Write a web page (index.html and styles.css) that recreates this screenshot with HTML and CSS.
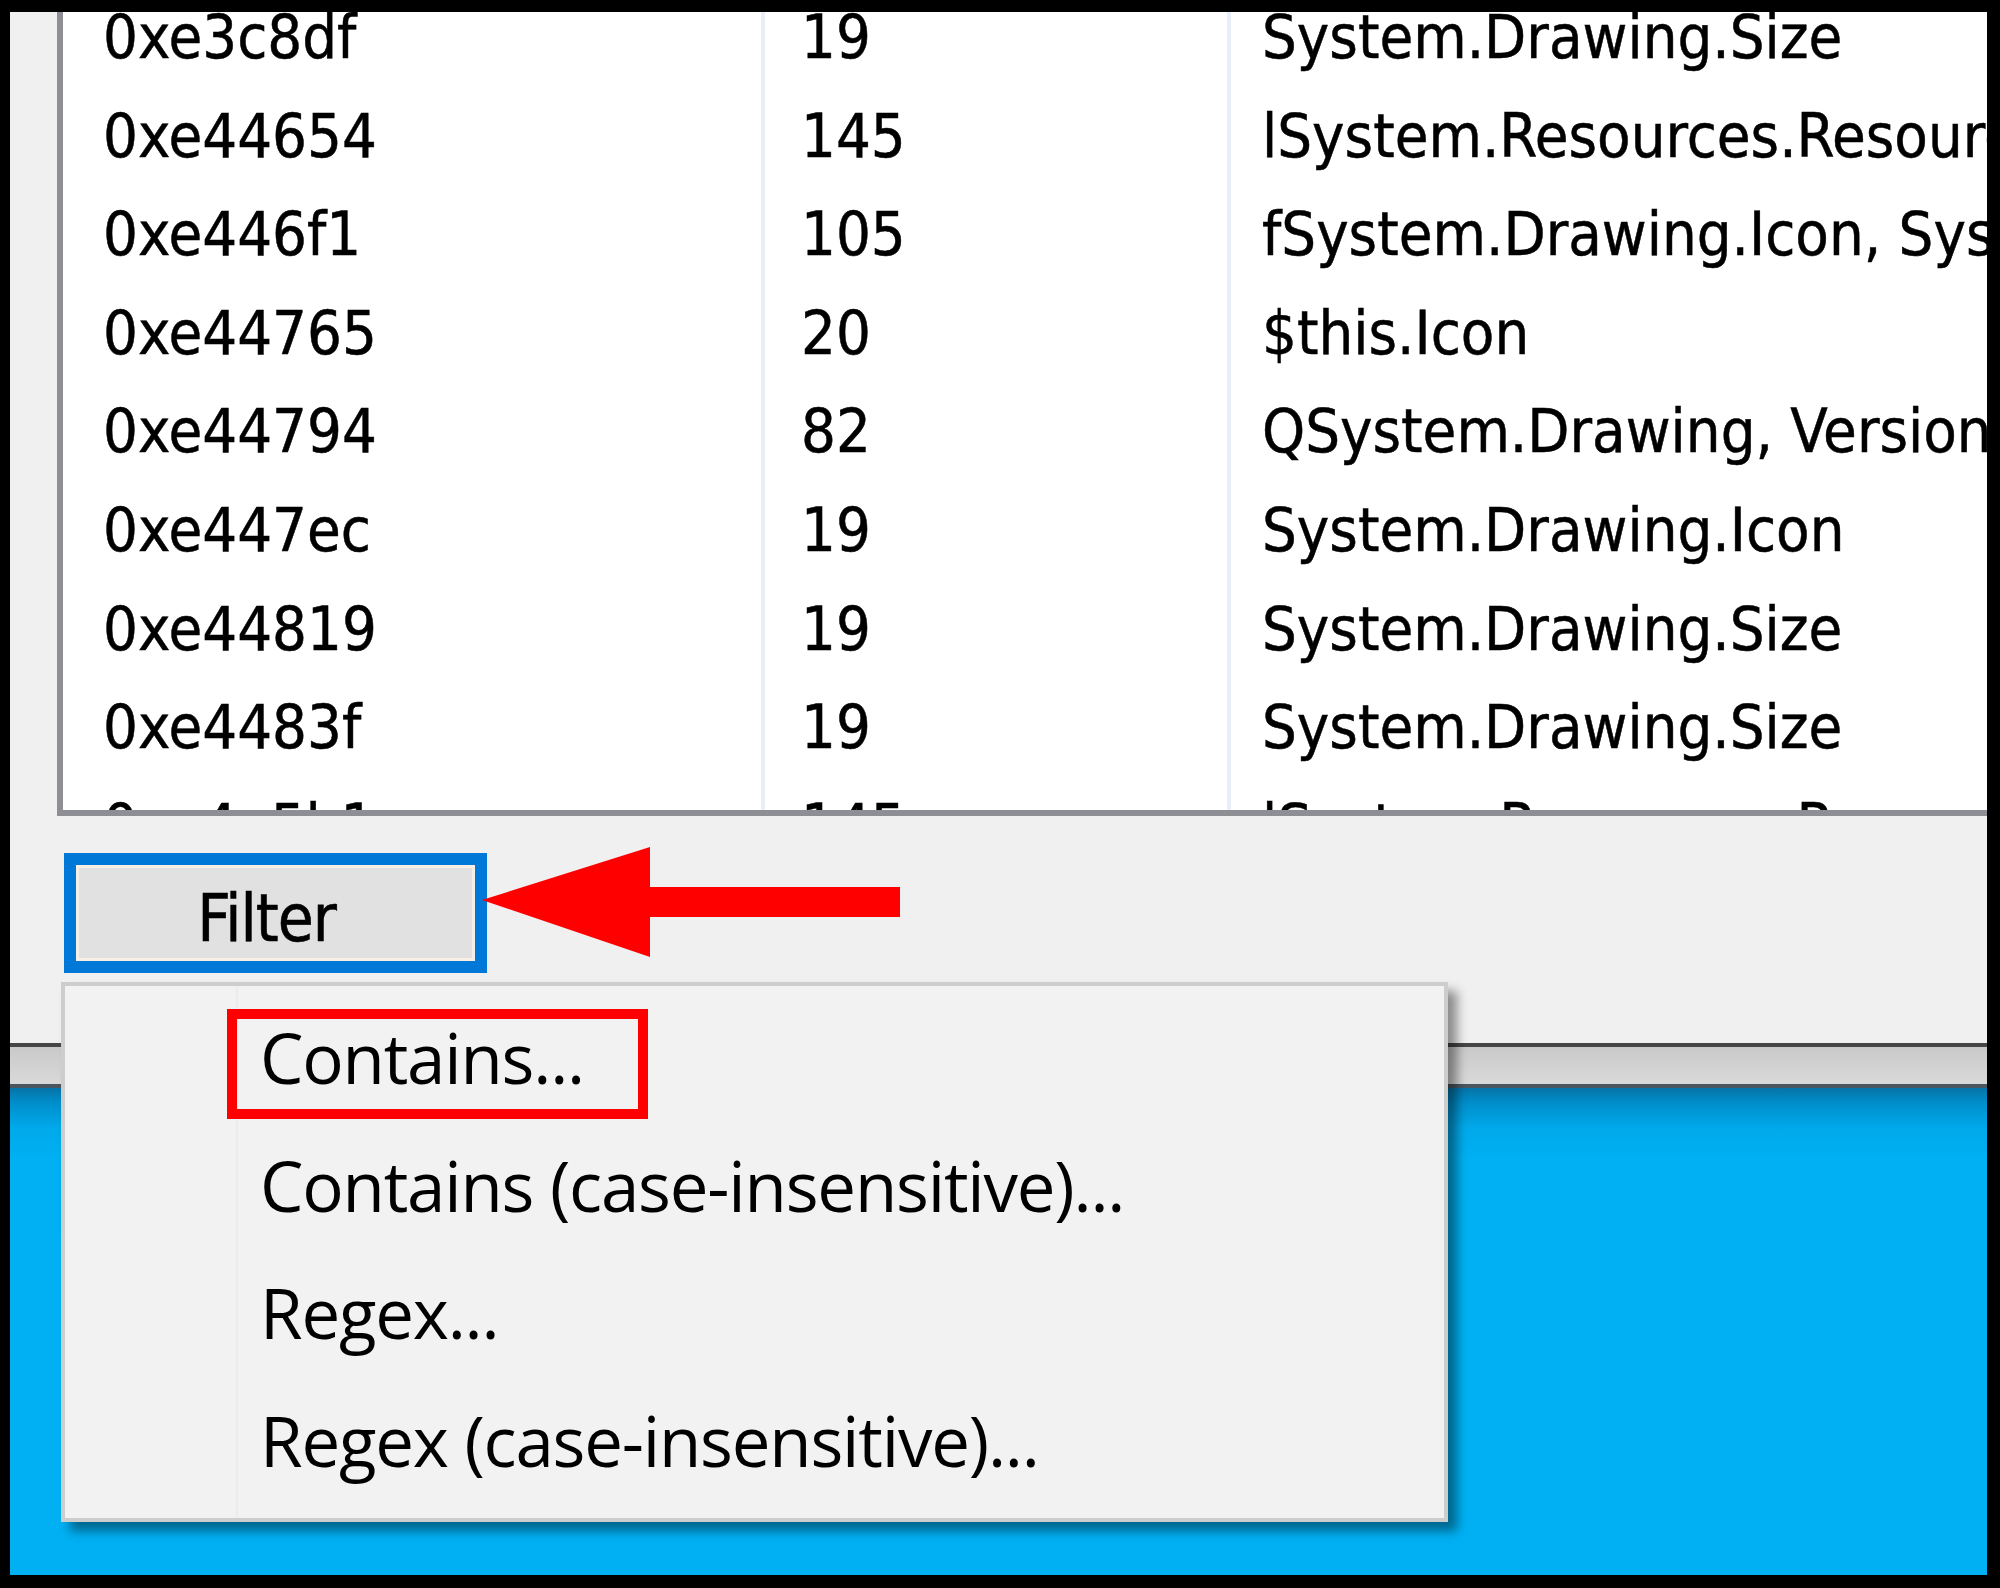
FILE: index.html
```html
<!DOCTYPE html>
<html>
<head>
<meta charset="utf-8">
<title>Filter menu</title>
<link rel="stylesheet" href="styles.css">
</head>
<body>
<div class="screen">
  <div class="window">
    <div class="list">
      <div class="rows">
        <div class="row"><span class="c c1">0xe3c8df</span><span class="c c2">19</span><span class="c c3">System.Drawing.Size</span></div>
        <div class="row"><span class="c c1">0xe44654</span><span class="c c2">145</span><span class="c c3">lSystem.Resources.ResourceReader, mscorlib, Version=4.0.0.0</span></div>
        <div class="row"><span class="c c1">0xe446f1</span><span class="c c2">105</span><span class="c c3">fSystem.Drawing.Icon, System.Drawing, Version=4.0.0.0</span></div>
        <div class="row"><span class="c c1">0xe44765</span><span class="c c2">20</span><span class="c c3">$this.Icon</span></div>
        <div class="row"><span class="c c1">0xe44794</span><span class="c c2">82</span><span class="c c3">QSystem.Drawing, Version=4.0.0.0, Culture=neutral</span></div>
        <div class="row"><span class="c c1">0xe447ec</span><span class="c c2">19</span><span class="c c3">System.Drawing.Icon</span></div>
        <div class="row"><span class="c c1">0xe44819</span><span class="c c2">19</span><span class="c c3">System.Drawing.Size</span></div>
        <div class="row"><span class="c c1">0xe4483f</span><span class="c c2">19</span><span class="c c3">System.Drawing.Size</span></div>
        <div class="row"><span class="c c1">0xe4a5b1</span><span class="c c2">145</span><span class="c c3">lSystem.Resources.ResourceReader, mscorlib</span></div>
      </div>
    </div>
    <button class="filter">Filter</button>
  </div>
  <div class="band"></div>
  <div class="desktop"></div>

  <svg class="arrow" width="2000" height="1588" viewBox="0 0 2000 1588">
    <polygon points="482,900 650,847 650,887 900,887 900,917 650,917 650,957" fill="#ff0000"/>
  </svg>

  <div class="menu">
    <div class="item marked">Contains...</div>
    <div class="item">Contains (case-insensitive)...</div>
    <div class="item">Regex...</div>
    <div class="item">Regex (case-insensitive)...</div>
  </div>
</div>
</body>
</html>
```

FILE: styles.css
```css
html, body {
  margin: 0;
  padding: 0;
  background: #000;
}

.screen {
  position: relative;
  width: 2000px;
  height: 1588px;
  box-sizing: border-box;
  padding: 12px 13px 13px 10px;
  display: flex;
  flex-direction: column;
  overflow: hidden;
  background: #000;
}

.window {
  flex: none;
  height: 1035px;
  box-sizing: border-box;
  background: #f0f0f0;
  border-bottom: 4px solid #464646;
  overflow: hidden;
  display: flex;
  flex-direction: column;
  align-items: flex-start;
}

.list {
  flex: none;
  margin-left: 47px;
  width: 2100px;
  height: 804px;
  box-sizing: border-box;
  background: #fff;
  border-left: 6px solid #8e8f94;
  border-bottom: 6px solid #8e8f94;
  overflow: hidden;
}

.rows {
  margin-top: -24px;
}

.row {
  display: grid;
  grid-template-columns: 698px 466px 1fr;
  height: 98.6px;
  line-height: 98.6px;
  font-family: "DejaVu Sans Condensed", "DejaVu Sans", sans-serif;
  font-stretch: condensed;
  font-size: 61px;
  color: #000;
  -webkit-text-stroke: 0.5px #000;
  white-space: nowrap;
}

.c {
  overflow: hidden;
}

.c1 {
  padding-left: 40px;
}

.c2 {
  border-left: 4px solid #e9eff8;
  padding-left: 36px;
}

.c3 {
  border-left: 4px solid #e9eff8;
  padding-left: 31px;
}

.filter {
  flex: none;
  margin: 37px 0 0 54px;
  width: 423px;
  height: 120px;
  box-sizing: border-box;
  border: 12px solid #0078d7;
  background: #e1e1e1;
  box-shadow: inset 0 0 0 3px #f7efe6;
  padding: 10px 18px 0 0;
  display: flex;
  align-items: center;
  justify-content: center;
  font-family: "DejaVu Sans Condensed", "DejaVu Sans", sans-serif;
  font-stretch: condensed;
  font-size: 65px;
  letter-spacing: -1px;
  color: #000;
  -webkit-text-stroke: 0.6px #000;
}

.band {
  flex: none;
  height: 41px;
  box-sizing: border-box;
  background: linear-gradient(#c9c9c9, #d3d3d3 60%, #d9d9d9);
  border-bottom: 4px solid #4b5760;
}

.desktop {
  flex: 1;
  background: linear-gradient(#0673a6 0, #008dca 14px, #00a9ea 40px, #00b0f2 70px, #00b0f3 100%);
}

.arrow {
  position: absolute;
  left: 0;
  top: 0;
  pointer-events: none;
}

.menu {
  position: absolute;
  left: 61px;
  top: 982px;
  width: 1387px;
  height: 540px;
  box-sizing: border-box;
  background: #f2f2f2;
  border: 4px solid #cdcdcd;
  padding-top: 8px;
  box-shadow: 9px 9px 10px rgba(0, 0, 0, 0.42);
}

.menu::before {
  content: "";
  position: absolute;
  left: 171px;
  top: 0;
  bottom: 0;
  width: 2px;
  background: #ececec;
}

.item {
  position: relative;
  height: 127.7px;
  line-height: 127.7px;
  padding-left: 195px;
  font-family: "Open Sans", "Noto Sans", sans-serif;
  font-size: 69px;
  letter-spacing: -1.2px;
  color: #000;
  white-space: nowrap;
}

.item.marked::before {
  content: "";
  position: absolute;
  left: 162px;
  top: 15px;
  width: 421px;
  height: 110px;
  box-sizing: border-box;
  border: 10px solid #ff0000;
}
```
